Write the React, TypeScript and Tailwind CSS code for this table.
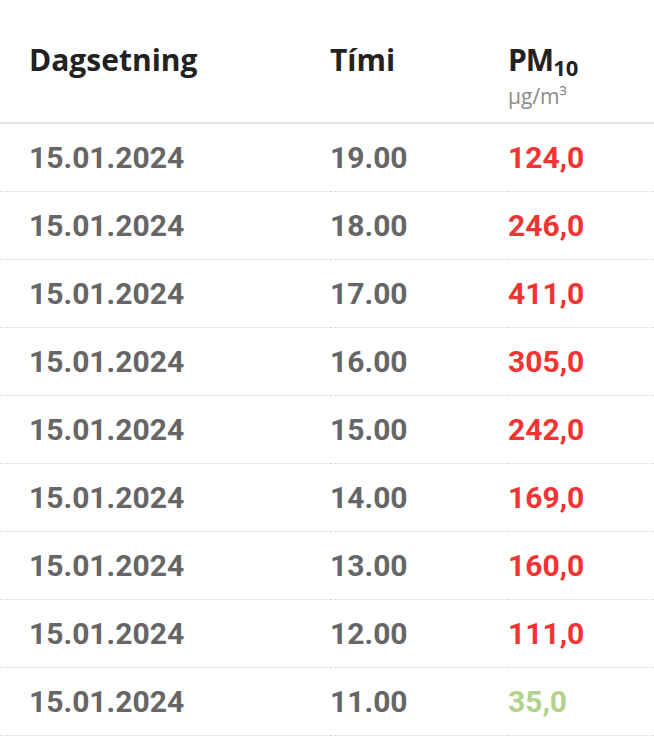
const rows = [
  { date: '15.01.2024', time: '19.00', value: '124,0', high: true },
  { date: '15.01.2024', time: '18.00', value: '246,0', high: true },
  { date: '15.01.2024', time: '17.00', value: '411,0', high: true },
  { date: '15.01.2024', time: '16.00', value: '305,0', high: true },
  { date: '15.01.2024', time: '15.00', value: '242,0', high: true },
  { date: '15.01.2024', time: '14.00', value: '169,0', high: true },
  { date: '15.01.2024', time: '13.00', value: '160,0', high: true },
  { date: '15.01.2024', time: '12.00', value: '111,0', high: true },
  { date: '15.01.2024', time: '11.00', value: '35,0', high: false },
];

export default function App() {
  return (
    <div className="w-[654px] h-[747px] bg-white overflow-hidden">
      <table className="w-full border-collapse">
        <thead>
          <tr className="border-b-2 border-[#e3e3e3] font-['Open_Sans',sans-serif] text-[#222] align-top">
            <th className="w-[330px] pl-[29px] pt-[40px] pb-[16px] text-left text-[30px] font-bold leading-[40px]">
              Dagsetning
            </th>
            <th className="w-[178px] pt-[40px] pb-[16px] text-left text-[30px] font-bold leading-[40px]">
              Tími
            </th>
            <th className="pt-[40px] pb-[14px] text-left font-bold">
              <div className="text-[30px] leading-[40px] tracking-[-1px]">
                PM<span className="text-[22px] tracking-normal relative top-[5px]">10</span>
              </div>
              <div className="mt-[2px] text-[21px] font-normal text-[#8a8a8a] leading-[24px]">µg/m³</div>
            </th>
          </tr>
        </thead>
        <tbody className="font-['Roboto',sans-serif] font-bold text-[30px]">
          {rows.map((row, i) => (
            <tr key={i} className="h-[68px] border-b border-dotted border-[#d6d6d6]">
              <td className="pl-[29px] text-[#666]">{row.date}</td>
              <td className="text-[#666]">{row.time}</td>
              <td className={row.high ? 'text-[#f23333]' : 'text-[#b3d18a]'}>{row.value}</td>
            </tr>
          ))}
        </tbody>
      </table>
    </div>
  );
}
